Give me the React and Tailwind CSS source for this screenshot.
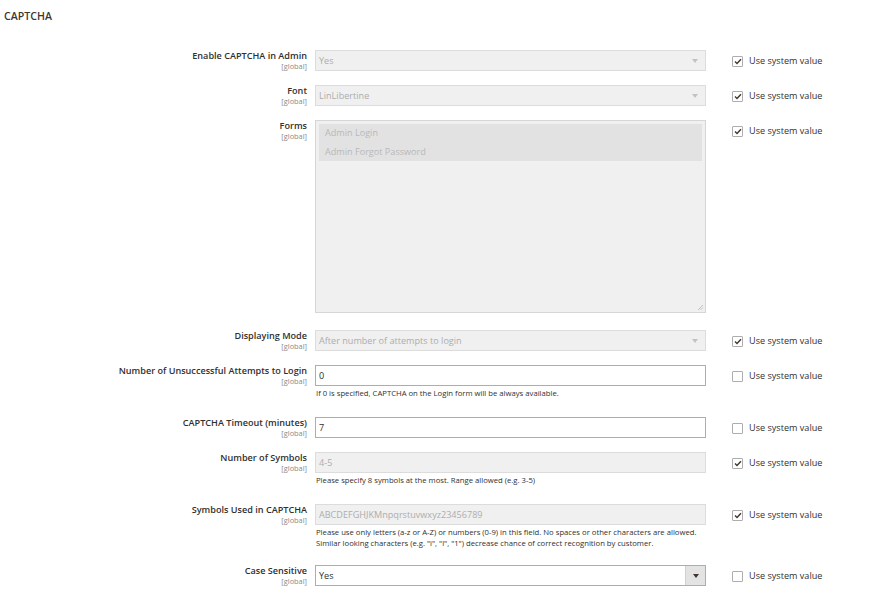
import { useState } from "react";

const rows = [
  { label: "Enable CAPTCHA in Admin", type: "select", value: "Yes", disabled: true, system: true },
  { label: "Font", type: "select", value: "LinLibertine", disabled: true, system: true },
  { label: "Forms", type: "multi", options: ["Admin Login", "Admin Forgot Password"], disabled: true, system: true },
  { label: "Displaying Mode", type: "select", value: "After number of attempts to login", disabled: true, system: true },
  {
    label: "Number of Unsuccessful Attempts to Login",
    type: "input",
    value: "0",
    system: false,
    note: ["If 0 is specified, CAPTCHA on the Login form will be always available."],
  },
  { label: "CAPTCHA Timeout (minutes)", type: "input", value: "7", system: false },
  {
    label: "Number of Symbols",
    type: "input",
    value: "4-5",
    disabled: true,
    system: true,
    note: ["Please specify 8 symbols at the most. Range allowed (e.g. 3-5)"],
  },
  {
    label: "Symbols Used in CAPTCHA",
    type: "input",
    value: "ABCDEFGHJKMnpqrstuvwxyz23456789",
    disabled: true,
    system: true,
    note: [
      "Please use only letters (a-z or A-Z) or numbers (0-9) in this field. No spaces or other characters are allowed.",
      "Similar looking characters (e.g. \"i\", \"l\", \"1\") decrease chance of correct recognition by customer.",
    ],
  },
  { label: "Case Sensitive", type: "select", value: "Yes", system: false },
];

function Arrow({ color }) {
  return (
    <svg width="6" height="4" viewBox="0 0 6 4" className="shrink-0">
      <path d="M0 0h6L3 4z" fill={color} />
    </svg>
  );
}

function Control({ row }) {
  const dis = row.disabled;
  if (row.type === "multi") {
    return (
      <div className="relative h-[193px] w-full border border-[#d6d6d6] bg-[#f0f0f0] p-[3px]">
        {row.options.map((o) => (
          <div key={o} className="h-[18.5px] bg-[#e2e2e2] pl-[6px] text-[9.1px] leading-[18.5px] text-[#b8b8b8]">
            {o}
          </div>
        ))}
        <svg width="7" height="7" viewBox="0 0 7 7" className="absolute bottom-[1px] right-[1px]">
          <path d="M6 1L1 6M6 3.5L3.5 6" stroke="#b5b5b5" strokeWidth="0.8" />
        </svg>
      </div>
    );
  }
  if (row.type === "select") {
    return (
      <div
        className={`flex h-[21px] w-full items-center border ${
          dis ? "border-[#dcdcdc] bg-[#f0f0f0] text-[#adadad]" : "border-[#adadad] bg-white text-[#303030]"
        }`}
      >
        <span className="flex-1 pl-[3px] text-[9.1px] leading-[19px]">{row.value}</span>
        {dis ? (
          <span className="flex w-[21px] items-center justify-center">
            <Arrow color="#c2c2c2" />
          </span>
        ) : (
          <span className="flex h-full w-[20px] items-center justify-center border-l border-[#d0d0d0] bg-[#e3e3e3]">
            <Arrow color="#41362f" />
          </span>
        )}
      </div>
    );
  }
  return (
    <div
      className={`h-[21px] w-full border pl-[3px] text-[9.1px] leading-[19px] ${
        dis ? "border-[#dcdcdc] bg-[#f0f0f0] text-[#adadad]" : "border-[#adadad] bg-white text-[#303030]"
      }`}
    >
      {row.value}
    </div>
  );
}

function Check({ initial }) {
  const [on, setOn] = useState(initial);
  return (
    <label className="flex cursor-pointer items-center gap-[6px]" onClick={() => setOn(!on)}>
      <span className="flex h-[11px] w-[11px] items-center justify-center rounded-[1px] border border-[#adadad] bg-white">
        {on && (
          <svg width="8" height="7" viewBox="0 0 8 7">
            <path d="M1 3.6L3 5.5L7 1.2" fill="none" stroke="#41362f" strokeWidth="1.4" />
          </svg>
        )}
      </span>
      <span className="text-[9.1px] leading-[12px] text-[#303030]">Use system value</span>
    </label>
  );
}

const spacing = ["mb-[14px]", "mb-[14px]", "mb-[17px]", "mb-[14px]", "mb-[18px]", "mb-[14px]", "mb-[18px]", "mb-[16px]", "mb-0"];

export default function App() {
  return (
    <div className="min-h-[613px] w-[878px] bg-white font-['Open_Sans',sans-serif] text-[#303030]">
      <h2 className="px-[4px] pt-[9px] text-[10.6px] font-semibold uppercase leading-[14px] text-[#41362f]">
        CAPTCHA
      </h2>
      <div className="pt-[27px]">
        {rows.map((row, i) => (
          <div key={row.label} className={`flex items-start ${spacing[i]}`}>
            <div className="w-[307px] shrink-0 text-right">
              <div className="text-[9.1px] font-semibold leading-[12px] text-[#303030]">{row.label}</div>
              <div className="text-[7.4px] leading-[8px] text-[#8a8a8a]">[global]</div>
            </div>
            <div className="ml-[8px] w-[391px] shrink-0">
              <Control row={row} />
              {row.note && (
                <div className="pt-[2px] pl-[1px] text-[7.7px] leading-[11px] text-[#303030]">
                  {row.note.map((n) => (
                    <div key={n}>{n}</div>
                  ))}
                </div>
              )}
            </div>
            <div className="ml-[26px] pt-[5px]">
              <Check initial={row.system} />
            </div>
          </div>
        ))}
      </div>
    </div>
  );
}
